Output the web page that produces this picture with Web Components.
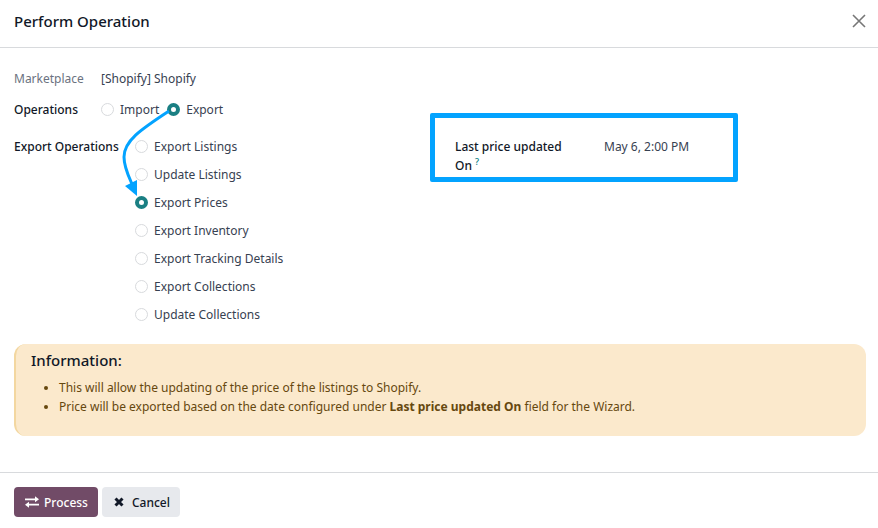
<!DOCTYPE html>
<html lang="en">
<head>
<meta charset="utf-8">
<meta name="viewport" content="width=device-width, initial-scale=1">
<title>Perform Operation</title>
<style>
    body {
        margin: 0;
        background: #fff;
        color: #374151;
        font: 12px/19px "Noto Sans", "Open Sans", sans-serif;
    }
</style>
</head>
<body>
<operation-dialog heading="Perform Operation">
    <form-field label="Marketplace" muted>[Shopify] Shopify</form-field>
    <form-field label="Operations">
        <radio-options name="operation" label="Operations" options="Import,Export" value="Export" inline></radio-options>
    </form-field>
    <split-row>
        <form-field label="Export Operations" wide>
            <radio-options
                name="export"
                label="Export Operations"
                options="Export Listings,Update Listings,Export Prices,Export Inventory,Export Tracking Details,Export Collections,Update Collections"
                value="Export Prices"
            ></radio-options>
            <flow-arrow slot="overlay"></flow-arrow>
        </form-field>
        <highlight-box slot="side">
            <form-field label="Last price updated On" help fixed>May 6, 2:00 PM</form-field>
        </highlight-box>
    </split-row>
    <info-alert heading="Information:">
        <ul>
            <li>This will allow the updating of the price of the listings to Shopify.</li>
            <li>Price will be exported based on the date configured under <b>Last price updated On</b> field for the Wizard.</li>
        </ul>
    </info-alert>
    <action-button slot="footer" icon="exchange" primary>Process</action-button>
    <action-button slot="footer" icon="times">Cancel</action-button>
</operation-dialog>

<script>
const html = String.raw;

/**
 * Dialog shell with a header, a body and a footer.
 *
 * @attribute {string} heading - The dialog title
 * @slot - Dialog content
 * @slot footer - Action buttons
 */
class OperationDialog extends HTMLElement {
    constructor() {
        super();
        this.attachShadow({ mode: 'open' });
    }

    connectedCallback() {
        this.shadowRoot.innerHTML = html`
            <style>
                :host {
                    display: block;
                }

                header {
                    display: flex;
                    align-items: center;
                    justify-content: space-between;
                    padding: 0 12px 5px 14px;
                    height: 42px;
                    border-bottom: 1px solid #d8dadd;
                }

                h1 {
                    margin: 0;
                    font-size: 15px;
                    font-weight: 500;
                    line-height: 20px;
                    color: #111827;
                }

                .Close {
                    display: flex;
                    padding: 0;
                    border: 0;
                    background: none;
                    color: #777;
                }

                main {
                    padding: 21px 12px 36px 14px;
                }

                footer {
                    display: flex;
                    gap: 4px;
                    padding: 14px;
                    border-top: 1px solid #d8dadd;
                }
            </style>

            <header>
                <h1></h1>
                <button class="Close" type="button" aria-label="Close">
                    <svg width="14" height="14" viewBox="0 0 14 14" fill="none" stroke="currentColor" stroke-width="1.6">
                        <path d="M1 1 13 13M13 1 1 13"/>
                    </svg>
                </button>
            </header>
            <main><slot></slot></main>
            <footer><slot name="footer"></slot></footer>
        `;

        this.shadowRoot.querySelector('h1').textContent = this.getAttribute('heading');
    }
}

/**
 * A label with its value.
 *
 * @attribute {string} label - The label text
 * @attribute {boolean} help - Display a question mark after the label
 * @slot - The value
 * @slot overlay - Drawn over the field
 */
class FormField extends HTMLElement {
    constructor() {
        super();
        this.attachShadow({ mode: 'open' });
    }

    connectedCallback() {
        this.shadowRoot.innerHTML = html`
            <style>
                :host {
                    display: flex;
                    gap: 14px;
                    position: relative;
                    margin-bottom: 12px;
                }

                .Label {
                    flex: none;
                    box-sizing: border-box;
                    min-width: 73px;
                    color: #111827;
                    font-weight: 500;
                }

                :host([muted]) .Label {
                    color: #6b7280;
                    font-weight: 400;
                }

                :host([wide]) .Label {
                    min-width: 107px;
                }

                :host([fixed]) .Label {
                    width: 135px;
                    padding-right: 20px;
                }

                :host([fixed]) {
                    margin-bottom: 0;
                }

                .Last {
                    white-space: nowrap;
                }

                sup {
                    font-size: 9px;
                    line-height: 0;
                    color: #017e84;
                }
            </style>

            <div class="Label"></div>
            <div class="Value"><slot></slot></div>
            <slot name="overlay"></slot>
        `;

        const label = this.shadowRoot.querySelector('.Label');

        if (!this.hasAttribute('help')) {
            label.textContent = this.getAttribute('label');
            return;
        }

        // keep the question mark on the line of the last word
        const words = this.getAttribute('label').split(' ');
        const last = document.createElement('span');
        const help = document.createElement('sup');
        help.textContent = '?';
        last.className = 'Last';
        last.append(words.pop(), ' ', help);
        label.append(words.join(' '), ' ', last);
    }
}

/**
 * A group of radio inputs.
 *
 * @attribute {string} options - A comma-separated list of choices
 * @attribute {string} value - The selected choice
 * @attribute {boolean} inline - Lay the choices out in a row
 */
class RadioOptions extends HTMLElement {
    constructor() {
        super();
        this.attachShadow({ mode: 'open' });
    }

    connectedCallback() {
        const name = this.getAttribute('name');
        const value = this.getAttribute('value');
        const options = this.getAttribute('options').split(',');

        this.shadowRoot.innerHTML = html`
            <style>
                :host {
                    display: block;
                }

                .Group {
                    display: flex;
                    flex-direction: column;
                    gap: 9px;
                }

                :host([inline]) .Group {
                    flex-direction: row;
                    gap: 8px;
                }

                .Option {
                    display: flex;
                    align-items: center;
                    gap: 6px;
                }

                input {
                    appearance: none;
                    flex: none;
                    box-sizing: border-box;
                    width: 13px;
                    height: 13px;
                    margin: 0;
                    border: 1px solid #d8dadd;
                    border-radius: 50%;
                    background: #fff;
                }

                input:checked {
                    border: 4px solid #1a7f83;
                }
            </style>

            <div class="Group" role="radiogroup">
                ${options.map((option, i) => html`
                    <div class="Option">
                        <input type="radio" id="option-${i}" name="${name}" ${option === value ? 'checked' : ''}>
                        <label for="option-${i}">${option}</label>
                    </div>
                `).join('')}
            </div>
        `;

        this.shadowRoot.querySelector('.Group').setAttribute('aria-label', this.getAttribute('label'));
    }
}

/**
 * Two columns, the main one and a side one.
 */
class SplitRow extends HTMLElement {
    constructor() {
        super();
        this.attachShadow({ mode: 'open' });
        this.shadowRoot.innerHTML = html`
            <style>
                :host {
                    display: grid;
                    grid-template-columns: 416fr 436fr;
                    align-items: start;
                    padding-top: 6px;
                }
            </style>

            <slot></slot>
            <slot name="side"></slot>
        `;
    }
}

/**
 * Blue frame that draws attention to a field.
 */
class HighlightBox extends HTMLElement {
    constructor() {
        super();
        this.attachShadow({ mode: 'open' });
        this.shadowRoot.innerHTML = html`
            <style>
                :host {
                    display: block;
                    box-sizing: border-box;
                    max-width: 308px;
                    margin-top: -24px;
                    padding: 19px 20px 2px;
                    border: 5px solid #03a3ff;
                    border-radius: 2px;
                }
            </style>

            <slot></slot>
        `;
    }
}

/**
 * Curved arrow from the selected operation to the selected export.
 */
class FlowArrow extends HTMLElement {
    constructor() {
        super();
        this.attachShadow({ mode: 'open' });
        this.shadowRoot.innerHTML = html`
            <style>
                :host {
                    position: absolute;
                    left: 106px;
                    top: -28px;
                    pointer-events: none;
                }

                svg {
                    display: block;
                }
            </style>

            <svg width="54" height="88" viewBox="0 0 54 88" aria-hidden="true">
                <path d="M49 2C20 21 4 32 4 48C4 58 8 66 12 75" fill="none" stroke="#03a3ff" stroke-width="3"/>
                <path d="M5 77 17 71 17 87Z" fill="#03a3ff"/>
            </svg>
        `;
    }
}

/**
 * Warning coloured information panel.
 *
 * @attribute {string} heading - The panel title
 */
class InfoAlert extends HTMLElement {
    constructor() {
        super();
        this.attachShadow({ mode: 'open' });
    }

    connectedCallback() {
        this.shadowRoot.innerHTML = html`
            <style>
                :host {
                    display: block;
                    margin-top: 8px;
                    padding: 6px 16px 20px 15px;
                    border-left: 2px solid #f3d7a0;
                    border-radius: 12px;
                    background: #fbe9cc;
                    color: #66480f;
                }

                h2 {
                    margin: 0 0 8px;
                    font-size: 15px;
                    font-weight: 500;
                    line-height: 20px;
                    color: #111827;
                }

                ::slotted(ul) {
                    margin: 0;
                    padding-left: 28px;
                }
            </style>

            <h2></h2>
            <slot></slot>
        `;

        this.shadowRoot.querySelector('h2').textContent = this.getAttribute('heading');
    }
}

const icons = {
    exchange: html`
        <svg width="14" height="12" viewBox="0 0 14 12" fill="currentColor" aria-hidden="true">
            <path d="M0 2.4H10V.3L14 3.3 10 6.2V4.2H0ZM14 7.8V9.6H4V11.7L0 8.7 4 5.8V7.8Z"/>
        </svg>
    `,
    times: html`
        <svg width="14" height="12" viewBox="0 0 14 12" fill="none" stroke="currentColor" stroke-width="3" aria-hidden="true">
            <path d="M2.5 2.5 9.5 9.5M9.5 2.5 2.5 9.5"/>
        </svg>
    `,
};

/**
 * Footer button.
 *
 * @attribute {string} icon - Name of the icon
 * @attribute {boolean} primary - Use the main colour
 */
class ActionButton extends HTMLElement {
    constructor() {
        super();
        this.attachShadow({ mode: 'open' });
    }

    connectedCallback() {
        this.shadowRoot.innerHTML = html`
            <style>
                :host {
                    display: block;
                }

                button {
                    display: flex;
                    align-items: center;
                    gap: 5px;
                    height: 30px;
                    padding: 0 10px 0 11px;
                    border: 0;
                    border-radius: 4px;
                    background: #e7e9ed;
                    color: #111827;
                    font: inherit;
                    font-weight: 500;
                }

                :host([primary]) button {
                    background: #714b67;
                    color: #fff;
                }
            </style>

            <button type="button">${icons[this.getAttribute('icon')]}<slot></slot></button>
        `;
    }
}

customElements.define('operation-dialog', OperationDialog);
customElements.define('form-field', FormField);
customElements.define('radio-options', RadioOptions);
customElements.define('split-row', SplitRow);
customElements.define('highlight-box', HighlightBox);
customElements.define('flow-arrow', FlowArrow);
customElements.define('info-alert', InfoAlert);
customElements.define('action-button', ActionButton);
</script>
</body>
</html>
